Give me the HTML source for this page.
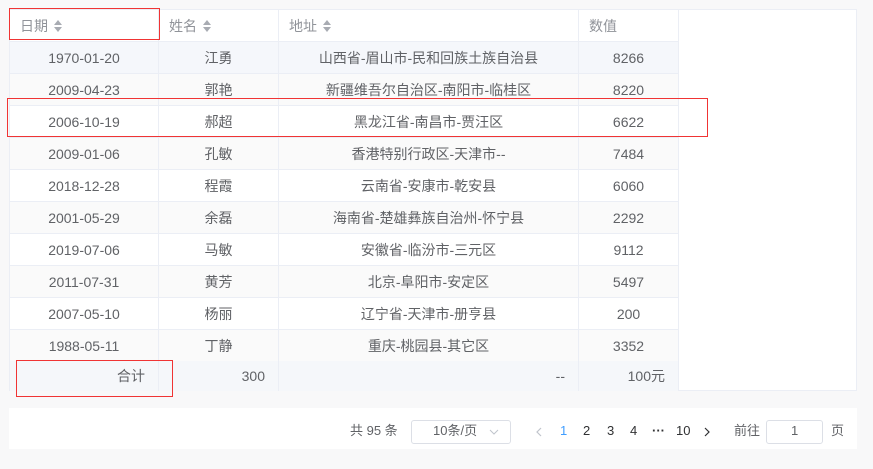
<!DOCTYPE html>
<html><head><meta charset="utf-8"><style>
*{box-sizing:border-box;margin:0;padding:0}
body{width:873px;height:469px;background:#f8f8f9;font-family:"Liberation Sans","Noto Sans CJK SC",sans-serif;font-size:14px;color:#606266;position:relative;overflow:hidden}
.tbl{position:absolute;left:9px;top:9px;width:848px;height:382px;background:#fff;border:1px solid #ebeef5}
.row{position:absolute;left:0;height:32px;display:flex}
.c{height:32px;line-height:32px;border-right:1px solid #ebeef5;border-bottom:1px solid #ebeef5;text-align:center;white-space:nowrap}
.w1{width:149px}.w2{width:120px}.w3{width:300px}.w4{width:100px}
.h .c{color:#909399;text-align:left;padding-left:10px}
.s{background:#fafafa}.hv{background:#f5f7fb}
.ft{background:#f5f7fa}
.ar{display:inline-block;vertical-align:middle;margin-left:6px;width:8px;height:12px;position:relative;top:-1px}
.ar:before{content:"";position:absolute;left:0;top:0;border:4px solid transparent;border-bottom:5px solid #a8abb2;border-top:0}
.ar:after{content:"";position:absolute;left:0;top:7px;border:4px solid transparent;border-top:5px solid #a8abb2;border-bottom:0}
.red{position:absolute;border:1px solid #f03434}
.pg{position:absolute;left:9px;top:408px;width:848px;height:41px;background:#fff}
.pg span{position:absolute;top:0;line-height:46px;font-size:13px}
.box{position:absolute;border:1px solid #dcdfe6;border-radius:3px;height:24px;top:12px}
</style></head><body>
<div class="tbl">
<div class="row h" style="top:0"><div class="c w1">日期<i class="ar"></i></div><div class="c w2">姓名<i class="ar"></i></div><div class="c w3">地址<i class="ar"></i></div><div class="c w4">数值</div></div>
<div class="row hv" style="top:32px"><div class="c w1">1970-01-20</div><div class="c w2">江勇</div><div class="c w3">山西省-眉山市-民和回族土族自治县</div><div class="c w4">8266</div></div>
<div class="row s" style="top:64px"><div class="c w1">2009-04-23</div><div class="c w2">郭艳</div><div class="c w3">新疆维吾尔自治区-南阳市-临桂区</div><div class="c w4">8220</div></div>
<div class="row" style="top:96px"><div class="c w1">2006-10-19</div><div class="c w2">郝超</div><div class="c w3">黑龙江省-南昌市-贾汪区</div><div class="c w4">6622</div></div>
<div class="row s" style="top:128px"><div class="c w1">2009-01-06</div><div class="c w2">孔敏</div><div class="c w3">香港特别行政区-天津市--</div><div class="c w4">7484</div></div>
<div class="row" style="top:160px"><div class="c w1">2018-12-28</div><div class="c w2">程霞</div><div class="c w3">云南省-安康市-乾安县</div><div class="c w4">6060</div></div>
<div class="row s" style="top:192px"><div class="c w1">2001-05-29</div><div class="c w2">余磊</div><div class="c w3">海南省-楚雄彝族自治州-怀宁县</div><div class="c w4">2292</div></div>
<div class="row" style="top:224px"><div class="c w1">2019-07-06</div><div class="c w2">马敏</div><div class="c w3">安徽省-临汾市-三元区</div><div class="c w4">9112</div></div>
<div class="row s" style="top:256px"><div class="c w1">2011-07-31</div><div class="c w2">黄芳</div><div class="c w3">北京-阜阳市-安定区</div><div class="c w4">5497</div></div>
<div class="row" style="top:288px"><div class="c w1">2007-05-10</div><div class="c w2">杨丽</div><div class="c w3">辽宁省-天津市-册亨县</div><div class="c w4">200</div></div>
<div class="row s" style="top:320px"><div class="c w1">1988-05-11</div><div class="c w2">丁静</div><div class="c w3">重庆-桃园县-其它区</div><div class="c w4">3352</div></div>
<div class="row ft" style="top:351px;height:30px"><div class="c w1" style="text-align:right;padding-right:13px;height:30px;line-height:30px;border-bottom:0">合计</div><div class="c w2" style="text-align:right;padding-right:13px;height:30px;line-height:30px;border-bottom:0">300</div><div class="c w3" style="text-align:right;padding-right:13px;height:30px;line-height:30px;border-bottom:0">--</div><div class="c w4" style="text-align:right;padding-right:13px;height:30px;line-height:30px;border-bottom:0">100元</div></div>
</div>
<div class="red" style="left:9px;top:8px;width:151px;height:32px"></div>
<div class="red" style="left:7px;top:98px;width:701px;height:39px"></div>
<div class="red" style="left:16px;top:360px;width:157px;height:37px"></div>
<div class="pg">
<span style="left:341px">共 95 条</span>
<div class="box" style="left:402px;width:100px"></div>
<span style="left:424px">10条/页</span>
<svg style="position:absolute;left:480px;top:21px" width="10" height="6" viewBox="0 0 10 6"><path d="M1 1L5 5L9 1" fill="none" stroke="#c0c4cc" stroke-width="1"/></svg>
<svg style="position:absolute;left:527px;top:19px" width="6" height="10" viewBox="0 0 6 10"><path d="M5 1L1 5L5 9" fill="none" stroke="#c0c4cc" stroke-width="1.2"/></svg>
<span style="left:551px;color:#409eff">1</span>
<span style="left:574px;color:#303133">2</span>
<span style="left:598px;color:#303133">3</span>
<span style="left:621px;color:#303133">4</span>
<span style="left:643px;color:#303133;font-weight:bold">···</span>
<span style="left:667px;color:#303133">10</span>
<svg style="position:absolute;left:695px;top:19px" width="6" height="10" viewBox="0 0 6 10"><path d="M1 1L5 5L1 9" fill="none" stroke="#303133" stroke-width="1.2"/></svg>
<span style="left:725px">前往</span>
<div class="box" style="left:757px;width:57px"></div>
<span style="left:782px">1</span>
<span style="left:822px">页</span>
</div>
</body></html>
